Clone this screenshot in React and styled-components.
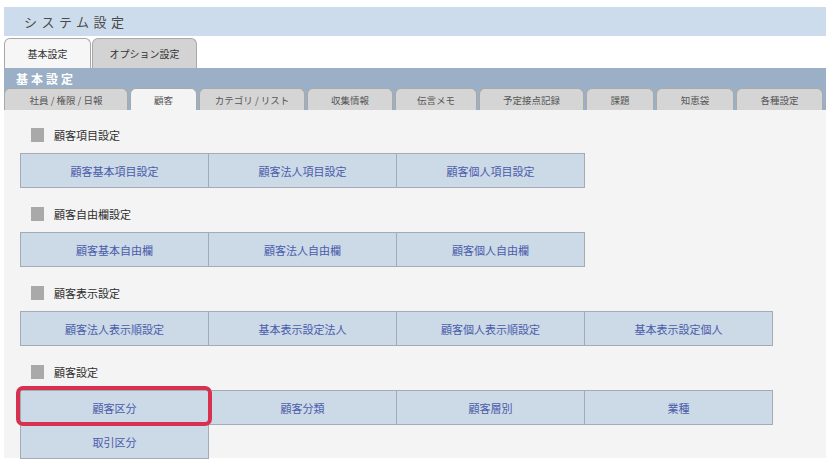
import React from "react";
import styled, { createGlobalStyle } from "styled-components";

const GlobalStyle = createGlobalStyle`
  body {
    margin: 0;
    background: #ffffff;
    font-family: "Noto Sans CJK JP", "Noto Sans", sans-serif;
  }
`;

const Page = styled.div`
  width: 826px;
  height: 464px;
  box-sizing: border-box;
  padding: 7px 0 0 4px;
  overflow: hidden;
`;

const Header = styled.div`
  height: 29px;
  background: #cddcec;
  display: flex;
  align-items: center;
  padding-left: 20px;
  font-size: 13px;
  letter-spacing: 4.5px;
  color: #4a4a4a;
`;

const TopTabs = styled.div`
  height: 32px;
  display: flex;
  align-items: flex-end;
  gap: 1px;
`;

const TopTab = styled.div`
  width: ${(p) => p.$w}px;
  height: 30px;
  box-sizing: border-box;
  border: 1px solid #a8a8a8;
  border-bottom: none;
  border-radius: 6px 6px 0 0;
  background: ${(p) => (p.$active ? "#f6f6f6" : "#d3d3d3")};
  display: flex;
  align-items: center;
  justify-content: center;
  font-size: 10px;
  color: #333;
`;

const Band = styled.div`
  background: #9bb0c6;
  height: 42px;
  display: flex;
  flex-direction: column;
`;

const BandLabel = styled.div`
  height: 20px;
  display: flex;
  align-items: center;
  padding-left: 12px;
  color: #ffffff;
  font-weight: bold;
  font-size: 12px;
  letter-spacing: 3px;
`;

const SubTabs = styled.div`
  height: 22px;
  display: flex;
  align-items: flex-end;
  gap: 2px;
`;

const SubTab = styled.div`
  width: ${(p) => p.$w}px;
  height: 22px;
  box-sizing: border-box;
  border: 1px solid #a9a9a9;
  border-bottom: none;
  border-radius: 6px 6px 0 0;
  background: ${(p) => (p.$active ? "#f4f4f4" : "#d5d5d5")};
  display: flex;
  align-items: center;
  justify-content: center;
  font-size: 9.5px;
  color: #555;
`;

const Content = styled.div`
  background: #f4f4f4;
  height: 348px;
  padding: 17px 0 0 16px;
  box-sizing: border-box;
`;

const Section = styled.div`
  margin-bottom: 18px;
`;

const Heading = styled.div`
  height: 16px;
  display: flex;
  align-items: center;
  gap: 10px;
  padding-left: 11px;
  margin-bottom: 10px;
  font-size: 11px;
  color: #2e2e2e;
`;

const Square = styled.span`
  width: 13px;
  height: 14px;
  background: #a9a9a9;
`;

const ButtonGrid = styled.div`
  display: grid;
  grid-template-columns: repeat(4, 188px);
  padding: 1px 0 0 1px;
`;

const CellWrap = styled.div`
  position: relative;
  margin: -1px 0 0 -1px;
`;

const Cell = styled.div`
  height: 35px;
  box-sizing: border-box;
  border: 1px solid #a3abb6;
  background: #ccd9e6;
  display: flex;
  align-items: center;
  justify-content: center;
  font-size: 11px;
  color: #4a5cab;
`;

const Highlight = styled.div`
  position: absolute;
  z-index: 1;
  top: -4px;
  left: -4px;
  right: -3px;
  bottom: -1px;
  border: 4px solid #d8304f;
  border-radius: 7px;
  pointer-events: none;
`;

const subTabs = [
  { label: "社員 / 権限 / 日報", w: 124 },
  { label: "顧客", w: 67, active: true },
  { label: "カテゴリ / リスト", w: 106 },
  { label: "収集情報", w: 86 },
  { label: "伝言メモ", w: 82 },
  { label: "予定接点記録", w: 105 },
  { label: "課題", w: 68 },
  { label: "知恵袋", w: 78 },
  { label: "各種設定", w: 87 },
];

const sections = [
  {
    title: "顧客項目設定",
    items: ["顧客基本項目設定", "顧客法人項目設定", "顧客個人項目設定"],
  },
  {
    title: "顧客自由欄設定",
    items: ["顧客基本自由欄", "顧客法人自由欄", "顧客個人自由欄"],
  },
  {
    title: "顧客表示設定",
    items: ["顧客法人表示順設定", "基本表示設定法人", "顧客個人表示順設定", "基本表示設定個人"],
  },
  {
    title: "顧客設定",
    items: ["顧客区分", "顧客分類", "顧客層別", "業種", "取引区分"],
    highlight: "顧客区分",
  },
];

export default function App() {
  return (
    <Page>
      <GlobalStyle />
      <Header>システム設定</Header>
      <TopTabs>
        <TopTab $w={87} $active>基本設定</TopTab>
        <TopTab $w={105}>オプション設定</TopTab>
      </TopTabs>
      <Band>
        <BandLabel>基本設定</BandLabel>
        <SubTabs>
          {subTabs.map((t) => (
            <SubTab key={t.label} $w={t.w} $active={t.active}>
              {t.label}
            </SubTab>
          ))}
        </SubTabs>
      </Band>
      <Content>
        {sections.map((s) => (
          <Section key={s.title}>
            <Heading>
              <Square />
              {s.title}
            </Heading>
            <ButtonGrid>
              {s.items.map((item) => (
                <CellWrap key={item}>
                  <Cell>{item}</Cell>
                  {s.highlight === item && <Highlight />}
                </CellWrap>
              ))}
            </ButtonGrid>
          </Section>
        ))}
      </Content>
    </Page>
  );
}
